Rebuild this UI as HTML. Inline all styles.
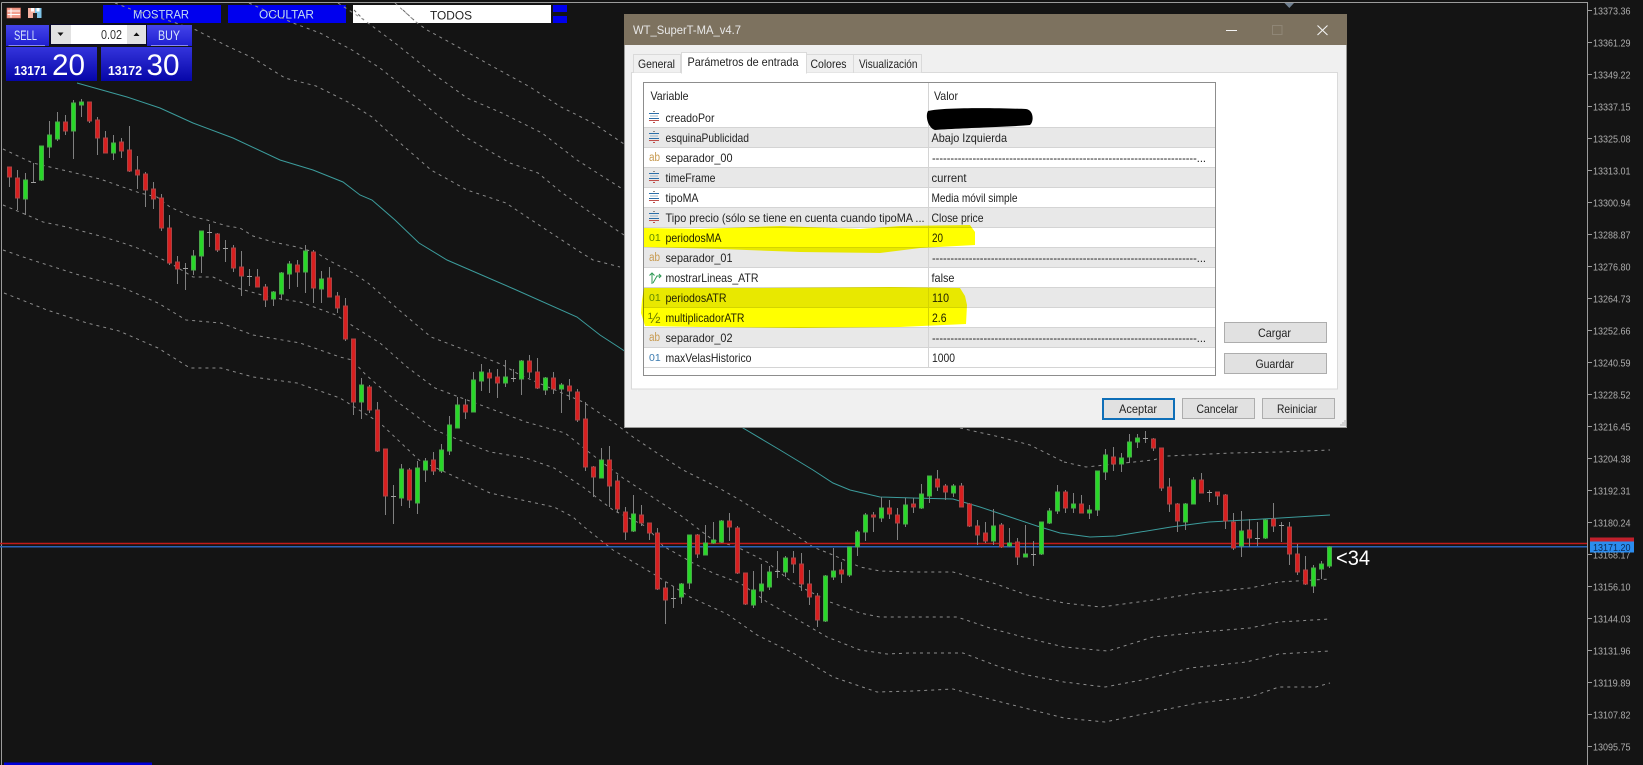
<!DOCTYPE html>
<html lang="es"><head><meta charset="utf-8"><title>WT_SuperT-MA_v4.7</title>
<style>html,body{margin:0;padding:0;background:#141414;overflow:hidden}svg{display:block;font-family:"Liberation Sans",sans-serif}</style></head>
<body>
<svg width="1643" height="765" viewBox="0 0 1643 765" xmlns="http://www.w3.org/2000/svg">
<defs>
<linearGradient id="g1" x1="0" y1="0" x2="0" y2="1"><stop offset="0" stop-color="#4444ea"/><stop offset="1" stop-color="#1f1fd0"/></linearGradient>
<linearGradient id="g2" x1="0" y1="0" x2="0" y2="1"><stop offset="0" stop-color="#3434dc"/><stop offset="1" stop-color="#0606a8"/></linearGradient>
<g id="e"><path d="M4 -5.500h2" stroke="#8a8a8a"/><path d="M0 -3.500h10M0 1.500h10" stroke="#2b6ea8"/><path d="M1 -1h8" stroke="#9ab8cc"/><path d="M0 3.500h10" stroke="#c0504d"/><path d="M4 5.500h2" stroke="#c0504d"/></g>
</defs>
<rect width="1643" height="765" fill="#141414"/>
<!-- chart frame -->
<path d="M1.500 2.500H1587.500V765M1.500 2.500V765" stroke="#9c9c9c" fill="none"/>
<!-- top buttons -->
<rect x="103" y="5" width="118" height="18" fill="#0000ee"/><rect x="228" y="5" width="118" height="18" fill="#0000ee"/><rect x="353" y="5" width="198" height="18" fill="#fff"/>
<rect x="553" y="5" width="14" height="7" fill="#0000ee"/><rect x="553" y="16" width="14" height="7" fill="#0000ee"/>
<text x="133" y="18.500" font-size="12" fill="#c4dcf4" textLength="56" lengthAdjust="spacingAndGlyphs">MOSTRAR</text>
<text x="259" y="18.500" font-size="12" fill="#c4dcf4" textLength="55" lengthAdjust="spacingAndGlyphs">OCULTAR</text>
<text x="430" y="19.500" font-size="12" fill="#222" textLength="42" lengthAdjust="spacingAndGlyphs">TODOS</text>
<path d="M354 10L364 20M403 10L416 22" stroke="#666" stroke-dasharray="3 3" fill="none"/>
<!-- bands -->
<g fill="none" stroke="#8c8c8c" stroke-dasharray="3 4">
<polyline points="115,3 133,10 173,22 196,30 225,45 253,58 285,78 316,86 348,102 372,117 399,142 431,170 467,190 506,203 542,227 577,250 593,260 620,267"/>
<polyline points="249,3 293,23 320,33 352,50 380,68 411,93 435,113 467,138 510,163 538,173 561,192 597,217 624,235"/>
<polyline points="338,3 364,20 395,43 431,72 467,98 502,113 542,133 577,160 624,190"/>
<polyline points="395,3 416,22 427,30 451,43 490,65 530,87 561,107 593,123 624,144"/>
<polyline points="3,149 20,157 33,163 50,167 67,171 100,179 117,185 140,193 157,197 170,207 190,216 207,220 227,226 240,228 253,236 273,242 297,247 317,253 328,260 353,273 368,283 399,310 431,337 473,353 503,365 520,375 583,402 613,422 633,437 657,453 683,470 717,487 740,500 767,517 793,533 813,547 833,555 860,567 880,571 913,572 953,572 993,583 1027,595 1064,603 1101,607 1153,600 1198,593 1250,588 1279,582 1330,579"/>
<polyline points="3,205 27,215 43,222 67,227 100,236 120,242 143,250 170,263 193,277 213,277 237,288 269,297 300,302 336,315 356,328 380,343 407,367 435,388 459,397 486,407 526,422 565,433 590,453 623,478 657,500 680,515 713,540 737,547 767,562 793,583 830,602 860,613 880,617 930,617 957,617 993,629 1027,638 1064,647 1108,651 1153,637 1201,632 1250,628 1279,622 1330,619"/>
<polyline points="3,250 32,260 79,275 119,286 158,303 186,320 221,323 253,335 300,343 340,357 352,360 366,375 395,400 435,430 459,440 490,452 526,458 554,468 583,487 613,510 647,527 663,546 693,563 713,573 740,583 767,602 793,617 827,637 860,650 887,654 910,653 963,653 1000,667 1027,675 1064,682 1105,687 1142,680 1190,668 1246,662 1279,654 1330,651"/>
<polyline points="4,293 47,310 87,323 119,331 158,348 190,368 221,368 253,377 297,383 340,398 380,423 419,460 447,473 490,493 554,507 573,517 583,526 613,550 652,573 690,597 727,614 757,635 793,653 833,677 877,692 913,691 953,689 993,700 1064,718 1105,722 1153,712 1198,703 1250,697 1279,687 1316,687 1330,683"/>
<polyline points="1064,462 1086,467 1153,460 1168,456 1231,453 1279,452 1330,450"/>
<polyline points="960,428 1000,437 1030,445 1064,462"/>
</g>
<polyline fill="none" stroke="#3c9c9c" points="77,83 127,97 160,108 193,123 233,138 280,160 313,170 343,182 360,195 372,200 395,220 419,243 447,260 514,289 577,317 600,335 620,348 660,375 743,428 780,450 813,470 833,483 850,490 880,497 913,498 953,499 980,507 1037,526 1060,533 1090,537 1116,536 1171,527 1209,522 1246,520 1313,516 1330,515"/>
<!-- price lines -->
<path d="M0 543.500H1587" stroke="#c01a1a" stroke-width="1.500"/>
<path d="M0 546.800H1587" stroke="#2a62b8" stroke-width="1.500"/>
<!-- wicks -->
<path fill="none" stroke="#808080" d="M9.500 167V187M17.500 170V210M25.500 173V215M33.500 163V183M41.500 146V181M49.500 121V158M57.500 112V141M65.500 115V135M73.500 100V159M81.500 99V117M89.500 102V123M97.500 117V155M105.500 131V153M113.500 135V160M121.500 138V158M129.500 126V172M137.500 156V189M145.500 172V207M153.500 182V209M161.500 194V231M169.500 215V265M177.500 256V284M185.500 263V290M193.500 250V275M201.500 231V273M209.500 224V247M217.500 233V252M225.500 240V262M233.500 245V272M241.500 251V296M249.500 269V286M257.500 269V287M265.500 284V307M273.500 291V306M281.500 272V300M289.500 261V289M297.500 260V287M305.500 245V293M313.500 250V303M321.500 271V303M329.500 267V297M337.500 292V313M345.500 298V341M353.500 339V415M361.500 378V419M369.500 385V413M377.500 402V452M385.500 449V515M393.500 485V524M401.500 464V506M409.500 468V508M417.500 461V514M425.500 458V482M433.500 452V475M441.500 444V473M449.500 416V455M457.500 397V428M465.500 399V419M473.500 372V412M481.500 364V391M489.500 369V393M497.500 369V398M505.500 360V387M513.500 369V382M521.500 360V395M529.500 355V378M537.500 358V389M545.500 377V395M553.500 372V394M561.500 383V413M569.500 379V400M577.500 389V422M585.500 402V471M593.500 466V497M601.500 448V478M609.500 446V507M617.500 475V513M625.500 507V540M633.500 495V532M641.500 505V526M649.500 523V540M657.500 528V590M665.500 582V624M673.500 587V608M681.500 583V604M689.500 535V589M697.500 534V558M705.500 525V555M713.500 522V544M721.500 520V543M729.500 513V541M737.500 526V574M745.500 573V605M753.500 571V608M761.500 564V603M769.500 566V590M777.500 551V578M785.500 556V577M793.500 551V573M801.500 553V591M809.500 570V605M817.500 593V627M825.500 575V622M833.500 548V580M841.500 562V583M849.500 547V577M857.500 530V556M865.500 513V541M873.500 512V532M881.500 497V522M889.500 500V519M897.500 508V540M905.500 498V527M913.500 498V513M921.500 484V509M929.500 476V503M937.500 470V491M945.500 484V500M953.500 484V497M961.500 483V507M969.500 503V527M977.500 520V545M985.500 522V543M993.500 509V545M1001.500 523V548M1009.500 528V547M1017.500 538V565M1025.500 525V557M1033.500 541V566M1041.500 522V555M1049.500 508V524M1057.500 485V514M1065.500 490V513M1073.500 493V513M1081.500 495V513M1089.500 505V519M1097.500 471V516M1105.500 449V480M1113.500 447V471M1121.500 453V472M1129.500 434V463M1137.500 434V448M1145.500 431V443M1153.500 438V451M1161.500 448V491M1169.500 478V512M1177.500 503V532M1185.500 503V530M1193.500 477V504M1201.500 473V493M1209.500 490V502M1217.500 492V505M1225.500 494V529M1233.500 513V550M1241.500 511V557M1249.500 519V547M1257.500 522V546M1265.500 519V539M1273.500 503V532M1281.500 522V542M1289.500 522V565M1297.500 544V575M1305.500 556V585M1313.500 565V593M1321.500 561V579M1329.500 546V568"/>
<!-- doji -->
<path fill="none" stroke="#a0a0a0" d="M31 182.500h5M183 268.500h5M207 232.500h5M223 248.500h5M247 276.500h5M391 496.500h5M511 378.500h5M671 598.500h5M775 571.500h5M1031 554.500h5M1143 438.500h5M1207 492.500h5M1255 538.500h5M1279 525.500h5"/>
<!-- green bodies -->
<path fill="#28d828" stroke="#4aa84a" d="M23.500 180h4v19h-4zM39.500 146h4v34h-4zM47.500 135h4v12h-4zM55.500 122h4v17h-4zM71.500 103h4v28h-4zM79.500 102h4v3h-4zM111.500 143h4v10h-4zM191.500 256h4v14h-4zM199.500 231h4v25h-4zM271.500 292h4v7h-4zM279.500 273h4v21h-4zM287.500 264h4v10h-4zM303.500 251h4v21h-4zM319.500 279h4v10h-4zM359.500 385h4v17h-4zM399.500 469h4v29h-4zM415.500 468h4v35h-4zM423.500 461h4v9h-4zM439.500 450h4v21h-4zM447.500 425h4v26h-4zM455.500 405h4v23h-4zM471.500 380h4v32h-4zM479.500 372h4v9h-4zM503.500 377h4v6h-4zM519.500 361h4v18h-4zM543.500 378h4v12h-4zM559.500 385h4v4h-4zM599.500 460h4v18h-4zM631.500 514h4v17h-4zM679.500 584h4v13h-4zM687.500 535h4v48h-4zM703.500 543h4v12h-4zM711.500 540h4v3h-4zM719.500 521h4v21h-4zM751.500 590h4v15h-4zM759.500 584h4v7h-4zM767.500 572h4v15h-4zM783.500 558h4v14h-4zM823.500 576h4v45h-4zM831.500 571h4v6h-4zM847.500 547h4v28h-4zM855.500 532h4v15h-4zM863.500 515h4v17h-4zM879.500 508h4v10h-4zM903.500 505h4v19h-4zM919.500 494h4v14h-4zM927.500 476h4v20h-4zM951.500 486h4v7h-4zM991.500 526h4v15h-4zM1007.500 543h4v3h-4zM1023.500 554h4v3h-4zM1039.500 522h4v32h-4zM1047.500 511h4v12h-4zM1055.500 492h4v19h-4zM1071.500 504h4v4h-4zM1087.500 510h4v3h-4zM1095.500 471h4v39h-4zM1103.500 455h4v17h-4zM1119.500 458h4v6h-4zM1127.500 442h4v15h-4zM1135.500 438h4v4h-4zM1183.500 504h4v18h-4zM1191.500 480h4v24h-4zM1239.500 531h4v15h-4zM1263.500 520h4v18h-4zM1311.500 568h4v18h-4zM1319.500 564h4v5h-4zM1327.500 547h4v19h-4z"/>
<!-- red bodies -->
<path fill="#d81f1f" stroke="#a84444" d="M7.500 167h4v10h-4zM15.500 178h4v20h-4zM63.500 122h4v9h-4zM87.500 102h4v19h-4zM95.500 120h4v18h-4zM103.500 138h4v15h-4zM119.500 142h4v9h-4zM127.500 150h4v21h-4zM135.500 170h4v5h-4zM143.500 174h4v16h-4zM151.500 189h4v10h-4zM159.500 198h4v30h-4zM167.500 228h4v35h-4zM175.500 262h4v7h-4zM215.500 234h4v16h-4zM231.500 248h4v20h-4zM239.500 267h4v9h-4zM255.500 277h4v10h-4zM263.500 287h4v13h-4zM295.500 265h4v7h-4zM311.500 252h4v36h-4zM327.500 278h4v19h-4zM335.500 296h4v12h-4zM343.500 306h4v33h-4zM351.500 339h4v63h-4zM367.500 387h4v23h-4zM375.500 410h4v41h-4zM383.500 449h4v47h-4zM407.500 470h4v30h-4zM431.500 460h4v11h-4zM463.500 405h4v7h-4zM487.500 373h4v5h-4zM495.500 377h4v6h-4zM527.500 361h4v11h-4zM535.500 372h4v16h-4zM551.500 378h4v11h-4zM567.500 386h4v5h-4zM575.500 392h4v28h-4zM583.500 419h4v48h-4zM591.500 467h4v10h-4zM607.500 460h4v26h-4zM615.500 481h4v28h-4zM623.500 512h4v20h-4zM639.500 515h4v8h-4zM647.500 523h4v10h-4zM655.500 533h4v56h-4zM663.500 588h4v12h-4zM695.500 535h4v19h-4zM727.500 521h4v6h-4zM735.500 528h4v45h-4zM743.500 573h4v31h-4zM791.500 558h4v6h-4zM799.500 564h4v20h-4zM807.500 584h4v13h-4zM815.500 596h4v24h-4zM839.500 570h4v4h-4zM871.500 515h4v2h-4zM887.500 508h4v6h-4zM895.500 515h4v8h-4zM911.500 504h4v3h-4zM935.500 479h4v8h-4zM943.500 486h4v6h-4zM959.500 486h4v21h-4zM967.500 504h4v22h-4zM975.500 526h4v9h-4zM983.500 533h4v8h-4zM999.500 525h4v22h-4zM1015.500 542h4v15h-4zM1063.500 492h4v16h-4zM1079.500 504h4v9h-4zM1111.500 457h4v7h-4zM1151.500 439h4v9h-4zM1159.500 448h4v40h-4zM1167.500 487h4v17h-4zM1175.500 504h4v17h-4zM1199.500 480h4v13h-4zM1215.500 492h4v4h-4zM1223.500 495h4v26h-4zM1231.500 522h4v26h-4zM1247.500 530h4v8h-4zM1271.500 519h4v7h-4zM1287.500 527h4v27h-4zM1295.500 554h4v18h-4zM1303.500 570h4v14h-4z"/>
<!-- <34 -->
<text x="1336" y="565" font-size="21" fill="#fff" textLength="34" lengthAdjust="spacingAndGlyphs">&lt;34</text>
<!-- axis -->
<path stroke="#9c9c9c" fill="none" d="M1588 10.500h4M1588 42.500h4M1588 74.500h4M1588 106.500h4M1588 138.500h4M1588 170.500h4M1588 202.500h4M1588 234.500h4M1588 266.500h4M1588 298.500h4M1588 330.500h4M1588 362.500h4M1588 394.500h4M1588 426.500h4M1588 458.500h4M1588 490.500h4M1588 522.500h4M1588 554.500h4M1588 586.500h4M1588 618.500h4M1588 650.500h4M1588 682.500h4M1588 714.500h4M1588 746.500h4"/>
<g font-size="10.500" fill="#aeaeae">
<text x="1593" y="14.500" textLength="37.500" lengthAdjust="spacingAndGlyphs">13373.36</text>
<text x="1593" y="46.500" textLength="37.500" lengthAdjust="spacingAndGlyphs">13361.29</text>
<text x="1593" y="78.500" textLength="37.500" lengthAdjust="spacingAndGlyphs">13349.22</text>
<text x="1593" y="110.500" textLength="37.500" lengthAdjust="spacingAndGlyphs">13337.15</text>
<text x="1593" y="142.500" textLength="37.500" lengthAdjust="spacingAndGlyphs">13325.08</text>
<text x="1593" y="174.500" textLength="37.500" lengthAdjust="spacingAndGlyphs">13313.01</text>
<text x="1593" y="206.500" textLength="37.500" lengthAdjust="spacingAndGlyphs">13300.94</text>
<text x="1593" y="238.500" textLength="37.500" lengthAdjust="spacingAndGlyphs">13288.87</text>
<text x="1593" y="270.500" textLength="37.500" lengthAdjust="spacingAndGlyphs">13276.80</text>
<text x="1593" y="302.500" textLength="37.500" lengthAdjust="spacingAndGlyphs">13264.73</text>
<text x="1593" y="334.500" textLength="37.500" lengthAdjust="spacingAndGlyphs">13252.66</text>
<text x="1593" y="366.500" textLength="37.500" lengthAdjust="spacingAndGlyphs">13240.59</text>
<text x="1593" y="398.500" textLength="37.500" lengthAdjust="spacingAndGlyphs">13228.52</text>
<text x="1593" y="430.500" textLength="37.500" lengthAdjust="spacingAndGlyphs">13216.45</text>
<text x="1593" y="462.500" textLength="37.500" lengthAdjust="spacingAndGlyphs">13204.38</text>
<text x="1593" y="494.500" textLength="37.500" lengthAdjust="spacingAndGlyphs">13192.31</text>
<text x="1593" y="526.500" textLength="37.500" lengthAdjust="spacingAndGlyphs">13180.24</text>
<text x="1593" y="558.500" textLength="37.500" lengthAdjust="spacingAndGlyphs">13168.17</text>
<text x="1593" y="590.500" textLength="37.500" lengthAdjust="spacingAndGlyphs">13156.10</text>
<text x="1593" y="622.500" textLength="37.500" lengthAdjust="spacingAndGlyphs">13144.03</text>
<text x="1593" y="654.500" textLength="37.500" lengthAdjust="spacingAndGlyphs">13131.96</text>
<text x="1593" y="686.500" textLength="37.500" lengthAdjust="spacingAndGlyphs">13119.89</text>
<text x="1593" y="718.500" textLength="37.500" lengthAdjust="spacingAndGlyphs">13107.82</text>
<text x="1593" y="750.500" textLength="37.500" lengthAdjust="spacingAndGlyphs">13095.75</text>
</g>
<rect x="1590" y="537.500" width="44" height="5" fill="#c0202c"/>
<rect x="1590" y="541.500" width="44" height="11" fill="#2b8cee"/>
<text x="1593" y="551" font-size="10.500" fill="#0c2a55" textLength="37.500" lengthAdjust="spacingAndGlyphs">13171.20</text>
<!-- bottom blue bar -->
<rect x="4" y="762.500" width="148" height="3" fill="#0000d8"/>
<!-- trade panel -->
<rect x="6" y="25" width="43" height="21" fill="url(#g1)"/>
<rect x="147" y="25" width="45" height="21" fill="url(#g1)"/>
<path d="M8.500 45.500H45M151 45.500H188" stroke="#8a8af0"/>
<text x="14" y="40" font-size="14" fill="#d6e6fb" textLength="23" lengthAdjust="spacingAndGlyphs">SELL</text>
<text x="158" y="40" font-size="14" fill="#d6e6fb" textLength="22" lengthAdjust="spacingAndGlyphs">BUY</text>
<rect x="6" y="47" width="91" height="34" fill="url(#g2)"/>
<rect x="101" y="47" width="91" height="34" fill="url(#g2)"/>
<text x="14" y="75" font-size="13" font-weight="700" fill="#fff" textLength="33" lengthAdjust="spacingAndGlyphs">13171</text>
<text x="108" y="75" font-size="13" font-weight="700" fill="#fff" textLength="34" lengthAdjust="spacingAndGlyphs">13172</text>
<text x="52" y="75" font-size="30" fill="#fff" textLength="33" lengthAdjust="spacingAndGlyphs">20</text>
<text x="146.500" y="75" font-size="30" fill="#fff" textLength="33" lengthAdjust="spacingAndGlyphs">30</text>
<rect x="50" y="24" width="97" height="21" fill="#0a0a2a"/>
<rect x="51" y="25" width="20" height="19" fill="#e2e2e2"/><rect x="71" y="25" width="56" height="19" fill="#fff"/><rect x="127" y="25" width="19" height="19" fill="#e2e2e2"/>
<path d="M57.500 32.500h6l-3 3.500zM133.500 36h6l-3-3.500z" fill="#111"/>
<text x="101" y="39" font-size="12.500" fill="#333" textLength="21" lengthAdjust="spacingAndGlyphs">0.02</text>
<!-- small toolbar icons -->
<rect x="7" y="8" width="13.500" height="10" fill="#f2a090"/><path d="M7.500 11h13M7.500 14.500h13M11 8v10" stroke="#fff"/><rect x="7" y="8" width="13.500" height="10" fill="none" stroke="#e07060" stroke-width=".6"/>
<rect x="28" y="8" width="7" height="10" fill="#f4b0a0"/><rect x="35" y="8" width="6.500" height="10" fill="#7fc4e8"/><rect x="31" y="8" width="3" height="3.500" fill="#fff"/><rect x="36.500" y="8" width="3" height="3.500" fill="#fff"/><rect x="33" y="13" width="4" height="5" fill="#222"/>
<!-- triangle above dialog -->
<path d="M1284.500 3h9.500l-4.700 5z" fill="#6f7f90"/>
<!-- dialog -->
<rect x="624" y="14" width="723" height="413.500" fill="#f0f0f0"/>
<rect x="624" y="14" width="723" height="31" fill="#7d725f"/>
<path d="M624.500 45V427.500H1346.500V45" fill="none" stroke="#9a9a98"/>
<text x="633" y="34" font-size="12" fill="#e8e8e8" textLength="108" lengthAdjust="spacingAndGlyphs">WT_SuperT-MA_v4.7</text>
<path d="M1226 30.500h11" stroke="#f4f4f4"/>
<rect x="1272.500" y="25.500" width="9.500" height="9" fill="none" stroke="#8f8676"/>
<path d="M1317.500 25.500l10 9.500M1327.500 25.500l-10 9.500" stroke="#f4f4f4" stroke-width="1.100"/>
<!-- tab panel -->
<rect x="631.500" y="72.500" width="706" height="316.500" fill="#fff" stroke="#dadada"/>
<path d="M633.500 72.500V54.500H680.500V72.500" fill="#f0f0f0" stroke="#dadada"/>
<path d="M806.500 72.500V54.500H853.500V72.500" fill="#f0f0f0" stroke="#dadada"/>
<path d="M853.500 72.500V54.500H921.500V72.500" fill="#f0f0f0" stroke="#dadada"/>
<path d="M681.500 73.500V52.500H806.500V73.500" fill="#fff" stroke="#dadada"/>
<rect x="682" y="71" width="124" height="3" fill="#fff"/>
<g font-size="12" fill="#222">
<text x="638" y="68" textLength="37" lengthAdjust="spacingAndGlyphs">General</text>
<text x="687.500" y="66" textLength="111" lengthAdjust="spacingAndGlyphs">Parámetros de entrada</text>
<text x="810.500" y="68" textLength="36" lengthAdjust="spacingAndGlyphs">Colores</text>
<text x="859" y="68" textLength="58.500" lengthAdjust="spacingAndGlyphs">Visualización</text>
</g>
<!-- list -->
<rect x="643.500" y="82.500" width="572" height="293" fill="#fff" stroke="#8d8d8d"/>
<g fill="#e8e8e8">
<rect x="644" y="127" width="571" height="20"/><rect x="644" y="167" width="571" height="20"/><rect x="644" y="207" width="571" height="20"/><rect x="644" y="247" width="571" height="20"/><rect x="644" y="287" width="571" height="20"/><rect x="644" y="327" width="571" height="20"/>
</g>
<path stroke="#d4d4d4" fill="none" d="M644 127.500H1215M644 147.500H1215M644 167.500H1215M644 187.500H1215M644 207.500H1215M644 227.500H1215M644 247.500H1215M644 267.500H1215M644 287.500H1215M644 307.500H1215M644 327.500H1215M644 347.500H1215M644 367.500H1215M928.500 83V367"/>
<!-- row icons -->
<use href="#e" x="649" y="117"/><use href="#e" x="649" y="137"/><use href="#e" x="649" y="177"/><use href="#e" x="649" y="197"/><use href="#e" x="649" y="217"/>
<g font-size="11.500" fill="#c79a50">
<text x="649" y="161" textLength="11" lengthAdjust="spacingAndGlyphs">ab</text><text x="649" y="261" textLength="11" lengthAdjust="spacingAndGlyphs">ab</text><text x="649" y="341" textLength="11" lengthAdjust="spacingAndGlyphs">ab</text>
</g>
<path d="M652 284V273M649.500 275.500L652 273L654.500 275.500M653 283L657 276H661M659 274l2 2l-2 2" fill="none" stroke="#2f9a55"/>
<!-- text -->
<g font-size="12" fill="#222">
<text x="650.500" y="100" textLength="38" lengthAdjust="spacingAndGlyphs">Variable</text>
<text x="934" y="100" textLength="24" lengthAdjust="spacingAndGlyphs">Valor</text>
<text x="665.500" y="122" textLength="49" lengthAdjust="spacingAndGlyphs">creadoPor</text>
<text x="665.500" y="142" textLength="83.500" lengthAdjust="spacingAndGlyphs">esquinaPublicidad</text>
<text x="665.500" y="162" textLength="67" lengthAdjust="spacingAndGlyphs">separador_00</text>
<text x="665.500" y="182" textLength="50" lengthAdjust="spacingAndGlyphs">timeFrame</text>
<text x="665.500" y="202" textLength="33" lengthAdjust="spacingAndGlyphs">tipoMA</text>
<text x="665.500" y="222" textLength="259" lengthAdjust="spacingAndGlyphs">Tipo precio (sólo se tiene en cuenta cuando tipoMA ...</text>
<text x="665.500" y="242" textLength="56" lengthAdjust="spacingAndGlyphs">periodosMA</text>
<text x="665.500" y="262" textLength="67" lengthAdjust="spacingAndGlyphs">separador_01</text>
<text x="665.500" y="282" textLength="93" lengthAdjust="spacingAndGlyphs">mostrarLineas_ATR</text>
<text x="665.500" y="302" textLength="61" lengthAdjust="spacingAndGlyphs">periodosATR</text>
<text x="665.500" y="322" textLength="79" lengthAdjust="spacingAndGlyphs">multiplicadorATR</text>
<text x="665.500" y="342" textLength="67" lengthAdjust="spacingAndGlyphs">separador_02</text>
<text x="665.500" y="362" textLength="86" lengthAdjust="spacingAndGlyphs">maxVelasHistorico</text>
<text x="931.500" y="142" textLength="75.500" lengthAdjust="spacingAndGlyphs">Abajo Izquierda</text>
<text x="932" y="162" textLength="274" lengthAdjust="spacingAndGlyphs">------------------------------------------------------------------------...</text>
<text x="931.500" y="182" textLength="35" lengthAdjust="spacingAndGlyphs">current</text>
<text x="931.500" y="202" textLength="86" lengthAdjust="spacingAndGlyphs">Media móvil simple</text>
<text x="931.500" y="222" textLength="52" lengthAdjust="spacingAndGlyphs">Close price</text>
<text x="932" y="242" textLength="11" lengthAdjust="spacingAndGlyphs">20</text>
<text x="932" y="262" textLength="274" lengthAdjust="spacingAndGlyphs">------------------------------------------------------------------------...</text>
<text x="931.500" y="282" textLength="23" lengthAdjust="spacingAndGlyphs">false</text>
<text x="932" y="302" textLength="17" lengthAdjust="spacingAndGlyphs">110</text>
<text x="932" y="322" textLength="14.500" lengthAdjust="spacingAndGlyphs">2.6</text>
<text x="932" y="342" textLength="274" lengthAdjust="spacingAndGlyphs">------------------------------------------------------------------------...</text>
<text x="932" y="362" textLength="23" lengthAdjust="spacingAndGlyphs">1000</text>
</g>
<g font-size="10.500">
<text x="649" y="241" fill="#5f8a2a">01</text>
<text x="649" y="301" fill="#5f8a2a">01</text>
<text x="649" y="361" fill="#3a7ab0">01</text>
</g>
<text x="648" y="323" font-size="15" fill="#6a7a10">½</text>
<!-- highlighter -->
<path style="mix-blend-mode:multiply" fill="#ffff00" d="M644 228L700 229L780 226L860 229L900 226L970 225L975 232L975 245L920 248L880 253L800 252L720 249L644 247Z"/>
<path style="mix-blend-mode:multiply" fill="#ffff00" d="M644 288L760 288L890 287L960 288L965 296L967 305L966 324L900 327L800 328L700 327L645 326L641 313L642 300Z"/>
<!-- redaction -->
<path d="M928 111C945 107 1000 108 1026 109C1034 110 1034 122 1030 125C1010 127 960 128 935 130C928 128 925 116 928 111Z" fill="#000"/>
<!-- buttons -->
<g fill="#e1e1e1" stroke="#adadad">
<rect x="1224.500" y="322.500" width="102" height="20"/>
<rect x="1224.500" y="353.500" width="102" height="20"/>
<rect x="1182.500" y="398.500" width="72" height="20"/>
<rect x="1262.500" y="398.500" width="72" height="20"/>
</g>
<rect x="1103" y="399" width="71" height="20" fill="#e1e1e1" stroke="#0f6fb8" stroke-width="2"/>
<g font-size="12" fill="#222">
<text x="1258" y="337" textLength="33" lengthAdjust="spacingAndGlyphs">Cargar</text>
<text x="1255.500" y="368" textLength="38.500" lengthAdjust="spacingAndGlyphs">Guardar</text>
<text x="1119" y="413" textLength="38" lengthAdjust="spacingAndGlyphs">Aceptar</text>
<text x="1196.500" y="413" textLength="41.500" lengthAdjust="spacingAndGlyphs">Cancelar</text>
<text x="1277" y="413" textLength="40" lengthAdjust="spacingAndGlyphs">Reiniciar</text>
</g>
<path d="M1344 421h2M1342 423h2M1344 423h2M1340 425h2M1342 425h2M1344 425h2" stroke="#b5b5b5"/>
</svg>
</body></html>
